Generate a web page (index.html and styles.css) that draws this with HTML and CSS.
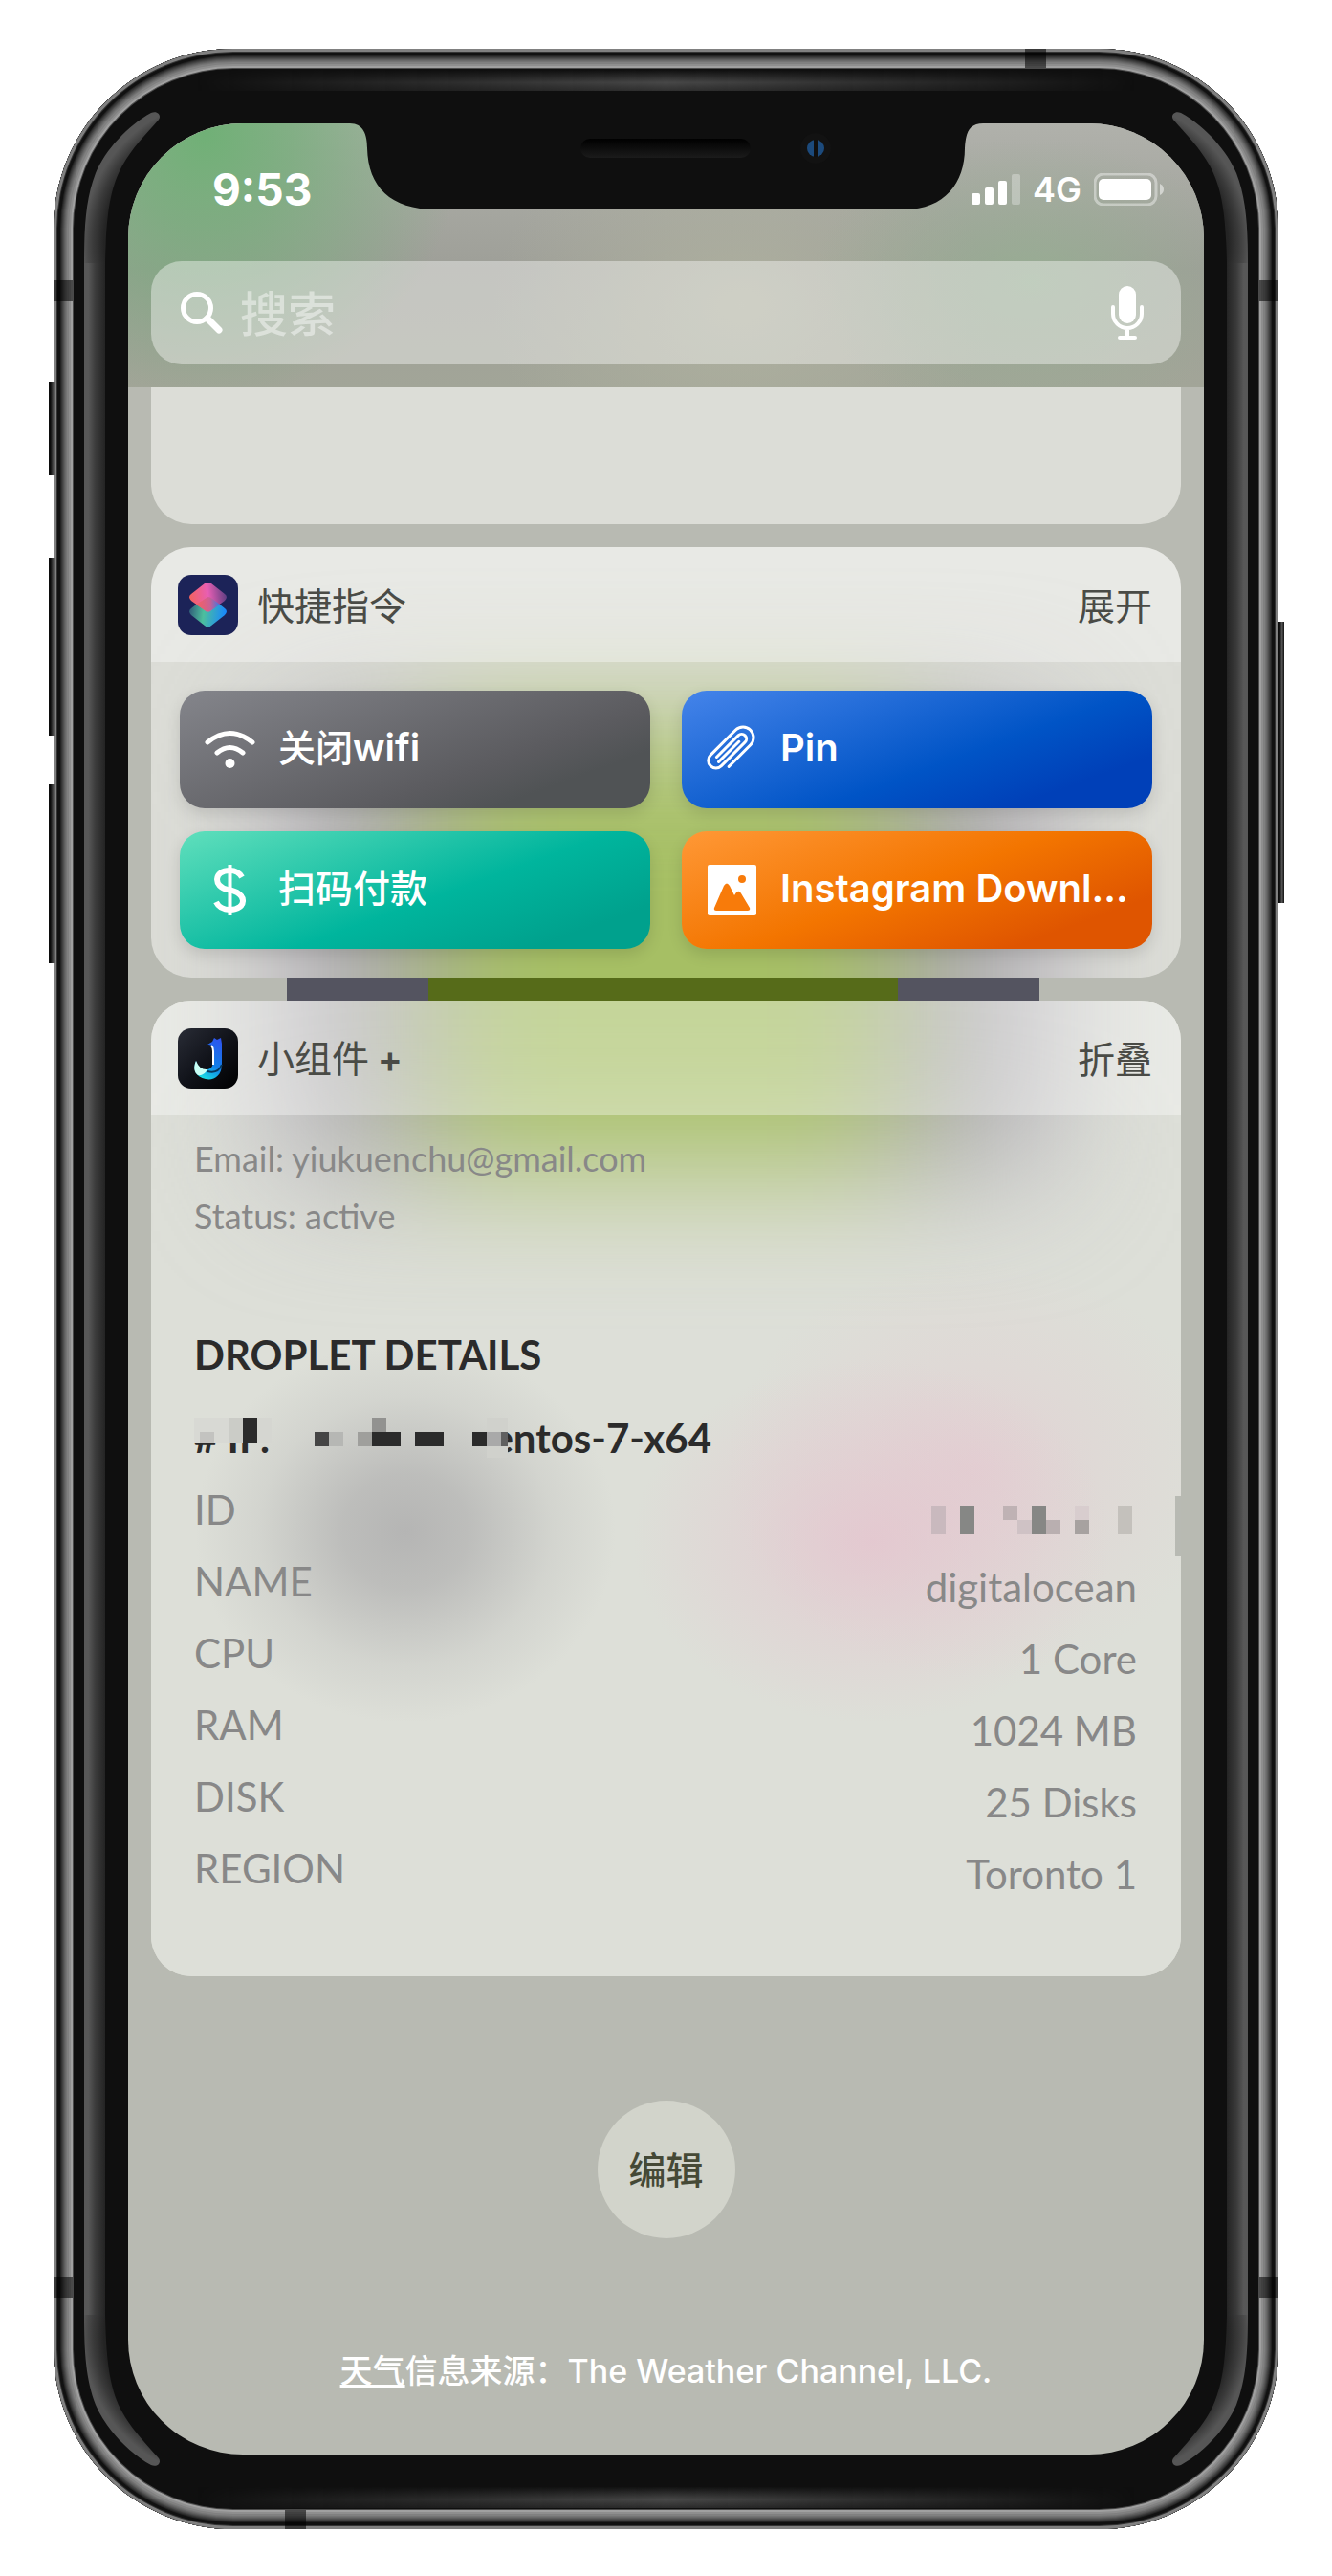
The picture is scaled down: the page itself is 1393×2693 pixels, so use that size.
FILE: index.html
```html
<!DOCTYPE html>
<html lang="zh-CN">
<head>
<meta charset="utf-8">
<meta name="viewport" content="width=device-width, initial-scale=1">
<title>小组件</title>
<link rel="stylesheet" href="styles.css">
</head>
<body>
<svg class="defs" aria-hidden="true">
  <defs>
    <radialGradient id="gloss" gradientUnits="userSpaceOnUse" cx="151" cy="140" r="157">
      <stop offset=".83" stop-color="#242424"/>
      <stop offset=".9" stop-color="#3a3a3a"/>
      <stop offset=".97" stop-color="#565656"/>
    </radialGradient>
    <symbol id="gloss-corner" viewBox="0 0 80 160">
      <path d="M0 160C0 120 2 92 12 66C22 42 46 16 70 3C77 0 81 6 78 10C64 26 50 40 40 58C28 80 23 106 22 160Z" fill="url(#gloss)"/>
    </symbol>
  </defs>
</svg>
<div class="phone">
  <span class="key key-mute"></span>
  <span class="key key-up"></span>
  <span class="key key-down"></span>
  <span class="key key-power"></span>
  <span class="band band-left band-high"></span>
  <span class="band band-right band-high"></span>
  <span class="band band-left band-low"></span>
  <span class="band band-right band-low"></span>
  <span class="band-flat band-top"></span>
  <span class="band-flat band-bottom"></span>
  <span class="sheen sheen-top"></span>
  <span class="sheen sheen-bottom"></span>
  <div class="gloss gloss-left">
    <svg width="80" height="160"><use href="#gloss-corner"/></svg>
    <span class="gloss-bar"></span>
    <svg class="flip" width="80" height="160"><use href="#gloss-corner"/></svg>
  </div>
  <div class="gloss gloss-right">
    <svg width="80" height="160"><use href="#gloss-corner"/></svg>
    <span class="gloss-bar"></span>
    <svg class="flip" width="80" height="160"><use href="#gloss-corner"/></svg>
  </div>

  <div class="screen">
    <header class="top">
      <svg class="notch" width="662" height="90" viewBox="0 0 662 90" aria-hidden="true">
        <defs>
          <linearGradient id="speaker" x1="0" y1="0" x2="0" y2="1"><stop offset="0" stop-color="#000"/><stop offset="1" stop-color="#1b1b1b"/></linearGradient>
        </defs>
        <path d="M0 0C14 0 18 12 18 26C19 66 42 90 90 90H580C622 90 643 62 643 26C644 12 646 0 662 0Z" fill="#0f0f0f"/>
        <rect x="241" y="16" width="178" height="20" rx="10" fill="url(#speaker)"/>
        <circle cx="487" cy="26" r="16" fill="#121212"/>
        <circle cx="487" cy="26" r="9" fill="#1c4a7c"/>
        <path d="M487 17V35" stroke="#0f0f0f" stroke-width="4"/>
      </svg>
      <div class="status">
        <time class="clock">9:53</time>
        <div class="signals">
          <svg width="51" height="32" viewBox="0 0 51 32" aria-label="信号" fill="#fff">
            <rect x="0" y="20" width="9" height="12" rx="2"/><rect x="14" y="14" width="9" height="18" rx="2"/><rect x="28" y="7" width="9" height="25" rx="2"/><rect x="42" y="0" width="9" height="32" rx="2" opacity=".3"/>
          </svg>
          <span class="network">4G</span>
          <svg width="73" height="34" viewBox="0 0 73 34" aria-label="电量">
            <rect x="1" y="1" width="64" height="32" rx="9" fill="none" stroke="#fff" stroke-opacity=".4" stroke-width="3"/>
            <rect x="5" y="6" width="55" height="22" rx="5" fill="#fff"/>
            <path d="M69 11Q73 13 73 17T69 23Z" fill="#fff" fill-opacity=".5"/>
          </svg>
        </div>
      </div>
      <form class="search">
        <svg width="44" height="44" viewBox="0 0 44 44" fill="none" stroke="#fff" aria-hidden="true">
          <circle cx="17" cy="17" r="14.500" stroke-width="5"/><path d="M28 28L40 40" stroke-width="7" stroke-linecap="round"/>
        </svg>
        <input class="search-input" type="search" placeholder="搜索" aria-label="搜索">
        <button class="mic" type="button" aria-label="语音">
          <svg width="34" height="56" viewBox="0 0 34 56" fill="none" stroke="#fff" stroke-width="4" stroke-linecap="round">
            <rect x="8" y="0" width="18" height="39" rx="9" fill="#fff" stroke="none"/><path d="M2 22V29A15 15 0 0 0 32 29V22M17 45V54M9 54H25"/>
          </svg>
        </button>
      </form>
    </header>

    <main class="widgets">
      <section class="card card-cut" aria-label="组件"></section>

      <section class="card card-shortcuts">
        <div class="backdrop"></div>
        <div class="card-head">
          <svg width="63" height="63" viewBox="0 0 63 63" aria-hidden="true">
            <defs>
              <linearGradient id="sc-top" x1="0" y1=".4" x2="1" y2=".3"><stop offset="0" stop-color="#f4625f"/><stop offset=".5" stop-color="#e85fb4"/><stop offset="1" stop-color="#5a3d80"/></linearGradient>
              <linearGradient id="sc-low" x1="0" y1=".3" x2="1" y2=".4"><stop offset="0" stop-color="#2f5a78"/><stop offset=".4" stop-color="#4dbf9d"/><stop offset="1" stop-color="#1787ff"/></linearGradient>
              <linearGradient id="sc-mid" x1="0" y1="0" x2="1" y2="0"><stop offset="0" stop-color="#fb6057"/><stop offset=".6" stop-color="#c0618a"/><stop offset="1" stop-color="#1787ff"/></linearGradient>
            </defs>
            <rect width="63" height="63" rx="14" fill="#1c2358"/>
            <path d="M28 24Q31.500 22 35 24L49 35Q53 38 49 42L35 53Q31.500 56 28 53L14 42Q10 38 14 35Z" fill="url(#sc-low)"/>
            <path d="M28 9Q31.500 7 35 9L49 20Q53 23 49 27L35 37Q31.500 40 28 37L14 27Q10 23 14 20Z" fill="url(#sc-top)"/>
            <path d="M31.500 23Q34 23 36 25L44 31L35 37Q31.500 40 28 37L19 31Z" fill="url(#sc-mid)" opacity=".75"/>
          </svg>
          <h2 class="card-title">快捷指令</h2>
          <button class="toggle" type="button">展开</button>
        </div>
        <div class="shortcuts">
          <button class="shortcut tone-gray" type="button">
            <svg width="53" height="53" viewBox="0 0 53 53" fill="none" stroke="#fff" stroke-width="5" stroke-linecap="round" aria-hidden="true"><path d="M3 19Q26.500 0 50 19M13 30Q26.500 19 40 30"/><circle cx="26.500" cy="41" r="5" fill="#fff" stroke="none"/></svg>
            <span class="shortcut-name"><span class="han">关闭</span>wifi</span>
          </button>
          <button class="shortcut tone-blue" type="button">
            <svg width="53" height="53" viewBox="0 0 53 53" aria-hidden="true"><path transform="translate(26 26) rotate(45)" d="M11 15V-17A11 11 0 0 0 -11 -17V20A8 8 0 0 0 5 20V-15A5 5 0 0 0 -5 -15V17M0 19V-11" fill="none" stroke="#fff" stroke-width="3" stroke-linecap="round"/></svg>
            <span class="shortcut-name">Pin</span>
          </button>
          <button class="shortcut tone-teal" type="button">
            <svg width="53" height="53" viewBox="0 0 53 53" fill="none" stroke="#fff" aria-hidden="true"><path d="M39 13Q35 6 26.500 6C9 6 9 23 24 26C46 29 44 47 26.500 47Q16 47 12 39" stroke-width="6"/><path d="M26.500 0V53" stroke-width="4"/></svg>
            <span class="shortcut-name"><span class="han">扫码付款</span></span>
          </button>
          <button class="shortcut tone-orange" type="button">
            <svg width="53" height="53" viewBox="0 0 53 53" aria-hidden="true"><rect x="1" width="51" height="53" rx="2" fill="#fff"/><g fill="#f87b0a"><path d="M8 45L18 22Q21 17 24 22L29 32L31 29Q34 26 36 30L45 45Q46 48 43 48H10Q7 48 8 45Z"/><circle cx="37" cy="15" r="4"/></g></svg>
            <span class="shortcut-name">Instagram Downl…</span>
          </button>
        </div>
      </section>

      <div class="wallpaper-gap"></div>

      <section class="card card-server">
        <div class="backdrop"></div>
        <div class="card-head">
          <svg width="63" height="63" viewBox="0 0 63 63" aria-hidden="true">
            <defs>
              <linearGradient id="j-bg" x1="0" y1="0" x2="1" y2="1"><stop offset="0" stop-color="#292c36"/><stop offset=".5" stop-color="#11131a"/><stop offset="1" stop-color="#000"/></linearGradient>
              <linearGradient id="j-fox" x1=".8" y1="0" x2=".4" y2="1"><stop offset="0" stop-color="#2d55ee"/><stop offset=".6" stop-color="#127fe8"/><stop offset="1" stop-color="#18dbe4"/></linearGradient>
            </defs>
            <rect width="63" height="63" rx="14" fill="url(#j-bg)"/>
            <path d="M31 17L36 14L38 10L41 12L45 10L46 16V38C46 50 37 55 29 53C19 51 15 43 19 34C21 41 26 45 31 43C36 42 37 38 37 34V22C37 18 34 17 31 17Z" fill="url(#j-fox)"/>
            <path d="M19 34C16 41 17 46 21 49Q27 50 31 43Q23 44 19 34Z" fill="#c9fff6"/>
            <path d="M35 18Q37 20 37 24V38" stroke="#fff" stroke-width="2" fill="none"/>
            <path d="M46 38Q42 48 31 45" stroke="#06375c" stroke-width="2" fill="none"/>
          </svg>
          <h2 class="card-title">小组件 <span class="plus">+</span></h2>
          <button class="toggle" type="button">折叠</button>
        </div>
        <div class="server">
          <p class="account">Email: yiukuenchu@gmail.com</p>
          <p class="account">Status: active</p>
          <h3 class="server-heading">DROPLET DETAILS</h3>
          <h4 class="server-name">
            <span># IP.</span><span>entos-7-x64</span>
            <svg class="redaction" width="328" height="42" viewBox="0 0 328 42" aria-hidden="true">
              <path d="M0 0H36V27H0Z" fill="#d8d9d4"/>
              <path d="M6 15h15v12H6z" fill="#c3c3c0"/>
              <path d="M36 0h15v27H36z" fill="#cbccc7"/>
              <path d="M66 0h15v27H66z" fill="#d5d6d1"/>
              <path d="M51 0h15v27H51zM186 15h30v15h-30zM231 15h30v15h-30zM291 15h15v15h-15z" fill="#2b2b2b"/>
              <path d="M126 15h15v15h-15z" fill="#454545"/>
              <path d="M141 15h15v15h-15z" fill="#b6b7b4"/>
              <path d="M171 15h15v15h-15z" fill="#9f9f9c"/>
              <path d="M186 0h15v15h-15z" fill="#929290"/>
              <path d="M306 0h22v42h-22z" fill="#d0d1cc"/>
              <path d="M306 15h15v15h-15z" fill="#a9a9a9"/>
              <path d="M321 15h7v15h-7z" fill="#606060"/>
            </svg>
          </h4>
          <table class="specs">
            <tr><th scope="row">ID</th><td class="masked">
              <svg width="215" height="30" viewBox="0 0 215 30" role="img" aria-label="已隐藏">
                <path d="M0 0h15v30H0z" fill="#c9b9be"/><path d="M30 0h15v30H30zM105 0h15v30h-15z" fill="#868785"/><path d="M75 0h15v15H75z" fill="#bfb2b4"/><path d="M90 15h15v15H90z" fill="#cfc2c5"/><path d="M120 15h15v15h-15z" fill="#b9afb0"/><path d="M150 0h15v15h-15z" fill="#d8cdce"/><path d="M150 15h15v15h-15z" fill="#a7a2a0"/><path d="M195 0h15v30h-15z" fill="#c4c1bc"/>
              </svg></td></tr>
            <tr><th scope="row">NAME</th><td>digitalocean</td></tr>
            <tr><th scope="row">CPU</th><td>1 Core</td></tr>
            <tr><th scope="row">RAM</th><td>1024 MB</td></tr>
            <tr><th scope="row">DISK</th><td>25 Disks</td></tr>
            <tr><th scope="row">REGION</th><td>Toronto 1</td></tr>
          </table>
        </div>
        <span class="scroll-thumb"></span>
      </section>

      <button class="edit" type="button">编辑</button>
      <p class="source"><a class="source-link" href="#weather">天气</a>信息来源：The Weather Channel, LLC.</p>
    </main>
  </div>
</div>
</body>
</html>
```
FILE: styles.css
```css
* { box-sizing: border-box; }

body {
  margin: 0;
  padding: 51px 56px;
  background: #fff;
  font-family: Inter, "Noto Sans CJK SC", sans-serif;
}

h2, h3, h4, p { margin: 0; font-weight: 400; }

button {
  border: 0;
  padding: 0;
  background: none;
  color: inherit;
  font: inherit;
  cursor: pointer;
}

.defs { position: absolute; width: 0; height: 0; }

/* Device shell */
.phone {
  position: relative;
  padding: 78px;
  border-radius: 188px;
  background: #0f0f0f;
  box-shadow:
    inset 0 0 0 3px #808080,
    inset 0 0 0 4px #343434,
    inset 0 0 0 7px #111,
    inset 0 0 0 8px #242424,
    inset 0 0 0 9px #343434,
    inset 0 0 0 10px #424242,
    inset 0 0 0 11px #505050,
    inset 0 0 0 12px #5e5e5e,
    inset 0 0 0 13px #6a6a6a,
    inset 0 0 0 14px #747474,
    inset 0 0 0 16px #808080,
    inset 0 0 0 18px #8e8e8e,
    inset 0 0 0 20px #a0a0a0,
    inset 0 0 0 21px #4a4a4a;
}

.key {
  position: absolute;
  left: -5px;
  width: 6px;
  background: linear-gradient(90deg, #0c0c0c 30%, #666);
}
.key-mute { top: 348px; height: 98px; }
.key-up { top: 532px; height: 186px; }
.key-down { top: 769px; height: 187px; }
.key-power { top: 599px; right: -6px; left: auto; height: 294px; background: linear-gradient(90deg, #0c0c0c 20%, #555, #111); }

.band { position: absolute; width: 20px; height: 22px; background: rgba(0, 0, 0, .55); }
.band-left { left: 0; }
.band-right { right: 0; }
.band-high { top: 242px; }
.band-low { bottom: 242px; }
.band-flat { position: absolute; width: 22px; height: 20px; background: rgba(0, 0, 0, .55); }
.band-top { top: 0; right: 243px; }
.band-bottom { bottom: 0; left: 242px; }

.sheen {
  position: absolute;
  left: 150px;
  right: 150px;
  height: 22px;
  -webkit-mask-image: linear-gradient(90deg, transparent, #000 50%, transparent);
  mask-image: linear-gradient(90deg, transparent, #000 50%, transparent);
}
.sheen-top { top: 22px; background: linear-gradient(#0f0f0f, #484848 60%, #303030); }
.sheen-bottom { bottom: 22px; background: linear-gradient(#121212, #484848 60%, #2c2c2c); }

.gloss {
  position: absolute;
  top: 64px;
  bottom: 64px;
  display: flex;
  flex-direction: column;
  width: 80px;
}
.gloss-left { left: 32px; }
.gloss-right { right: 32px; transform: scaleX(-1); }
.gloss-bar { flex: 1; width: 22px; background: linear-gradient(90deg, #585858 20%, #3a3a3a 55%, #242424); }
.flip { transform: scaleY(-1); }

/* Screen */
.screen {
  position: relative;
  overflow: hidden;
  border-radius: 120px;
  background: #b8bab2;
}

.top {
  position: relative;
  padding: 0 24px 24px;
  background:
    radial-gradient(270px 280px at 80px 10px, #70b076, rgba(112, 174, 118, .7) 35%, rgba(112, 174, 118, 0)),
    radial-gradient(230px 150px at 84% 165px, rgba(150, 176, 146, .8), rgba(150, 176, 146, 0)),
    radial-gradient(260px 200px at 57% 190px, rgba(176, 178, 160, .9), rgba(176, 178, 160, 0)),
    linear-gradient(#b0b1ab, #9e9f98 55%, #a2a598);
}
.notch { position: absolute; top: 0; left: 50%; margin-left: -331px; }

.status {
  display: flex;
  justify-content: space-between;
  align-items: center;
  height: 138px;
  margin-bottom: 6px;
  padding: 0 18px 0 64px;
  color: #fff;
}
.clock { font-size: 46px; font-weight: 700; }
.signals { display: flex; align-items: center; gap: 13px; }
.network { font-size: 36px; font-weight: 600; }

.search {
  display: flex;
  align-items: center;
  gap: 18px;
  height: 108px;
  padding: 0 39px 0 31px;
  border-radius: 32px;
  background: rgba(255, 255, 255, .4);
}
.search-input {
  flex: 1;
  min-width: 0;
  padding: 0 0 4px;
  border: 0;
  outline: 0;
  background: none;
  color: #fff;
  font: 500 50px/72px "Noto Sans CJK SC", sans-serif;
}
.search-input::placeholder { color: rgba(255, 255, 255, .45); opacity: 1; }
.mic { display: flex; }

.widgets {
  display: flex;
  flex-direction: column;
  padding: 0 24px 57px;
}

/* Cards */
.card {
  position: relative;
  overflow: hidden;
  border-radius: 42px;
  background: #dcddd7;
}
.card-cut { height: 143px; margin-bottom: 24px; border-radius: 0 0 42px 42px; }

.backdrop { position: absolute; inset: 0; overflow: hidden; }
.backdrop::before {
  content: "";
  position: absolute;
  left: 13.2%;
  right: 13.7%;
  background: linear-gradient(90deg, #aaa6b0 19%, #a6bf64 19% 81%, #aaa6b0 81%);
  filter: blur(70px);
}
.card-shortcuts .backdrop::before { top: 190px; bottom: -200px; }
.card-server .backdrop::before { top: -200px; height: 375px; }
.card-server .backdrop {
  background:
    radial-gradient(220px 200px at 266px 555px, #b5b5b4, rgba(181, 181, 180, .8) 30%, rgba(181, 181, 180, .25) 70%, rgba(181, 181, 180, 0)),
    radial-gradient(250px 190px at 70% 565px, rgba(229, 195, 206, .75), rgba(229, 195, 206, .35) 50%, rgba(229, 195, 206, 0)),
    radial-gradient(260px 220px at 80% 490px, rgba(229, 200, 208, .6), rgba(229, 200, 208, .25) 50%, rgba(229, 200, 208, 0)),
    #dddfd8;
}

.card-head {
  position: relative;
  display: flex;
  align-items: center;
  gap: 20px;
  height: 120px;
  padding: 0 30px 0 28px;
  background: rgba(255, 255, 255, .35);
  color: #4a4b46;
  font-size: 39px;
  line-height: 58px;
}
.card-title, .toggle { padding-bottom: 2px; font-family: "Noto Sans CJK SC", sans-serif; }
.card-title { flex: 1; font-size: 39px; }
.plus { font-family: Inter, sans-serif; font-weight: 600; }

.shortcuts {
  position: relative;
  display: grid;
  grid-template-columns: 1fr 1fr;
  gap: 24px 33px;
  padding: 30px;
}
.shortcut {
  display: flex;
  align-items: center;
  gap: 24px;
  min-width: 0;
  height: 123px;
  padding: 0 20px 0 26px;
  border-radius: 26px;
  box-shadow: 0 6px 16px rgba(0, 0, 0, .12);
  color: #fff;
  font-size: 40px;
  font-weight: 600;
  line-height: 48px;
  text-align: left;
}
.shortcut svg { flex: none; }
.shortcut-name { padding-bottom: 3px; white-space: nowrap; }
.han { font-size: 39px; font-weight: 500; }
.tone-gray { background: linear-gradient(160deg, #84858b, #5b5b5f 65%, #505355 80%); }
.tone-blue { background: linear-gradient(160deg, #4584ea, #0054c6 58%, #0040b8 82%); }
.tone-teal { background: linear-gradient(160deg, #60dfbc, #00b59d 55%, #00a18d 85%); }
.tone-orange { background: linear-gradient(160deg, #ff9836, #f37500 48%, #df5500 82%); }

.wallpaper-gap {
  height: 24px;
  background: linear-gradient(90deg, transparent 13.2%, #545460 13.2% 26.9%, #566b19 26.9% 72.5%, #545460 72.5% 86.3%, transparent 86.3%);
}

/* Server widget */
.server {
  position: relative;
  padding: 15px 46px 75px 45px;
  color: #888;
  font-family: Lato, sans-serif;
}
.account { font-size: 36px; line-height: 60px; }
.server-heading, .server-name {
  color: #2b2b2b;
  font-size: 42px;
  font-weight: 700;
  line-height: 76px;
}
.server-heading { margin: 77px 0 11px; }
.server-name {
  position: relative;
  display: flex;
  justify-content: space-between;
  width: 541px;
}
.redaction { position: absolute; top: 17px; left: 0; }

.specs { width: 100%; border-collapse: collapse; font-size: 42px; }
.specs th, .specs td { padding: 0; vertical-align: top; font-weight: 400; }
.specs th { text-align: left; line-height: 75px; }
.specs td { padding-top: 12px; text-align: right; line-height: 63px; }
.specs .masked { padding-top: 33px; }
.masked svg { display: block; margin-left: auto; }

.scroll-thumb {
  position: absolute;
  right: 0;
  top: 518px;
  width: 6px;
  height: 63px;
  background: #b8bab3;
}

.edit {
  align-self: center;
  width: 144px;
  height: 144px;
  margin-top: 130px;
  padding-bottom: 4px;
  border-radius: 50%;
  background: #d2d4cb;
  color: #454936;
  font: 500 39px/58px "Noto Sans CJK SC", sans-serif;
}
.source {
  margin-top: 109px;
  color: #fff;
  font-size: 34px;
  font-weight: 500;
  line-height: 60px;
  text-align: center;
}
.source-link { color: inherit; text-decoration: underline; }
```
